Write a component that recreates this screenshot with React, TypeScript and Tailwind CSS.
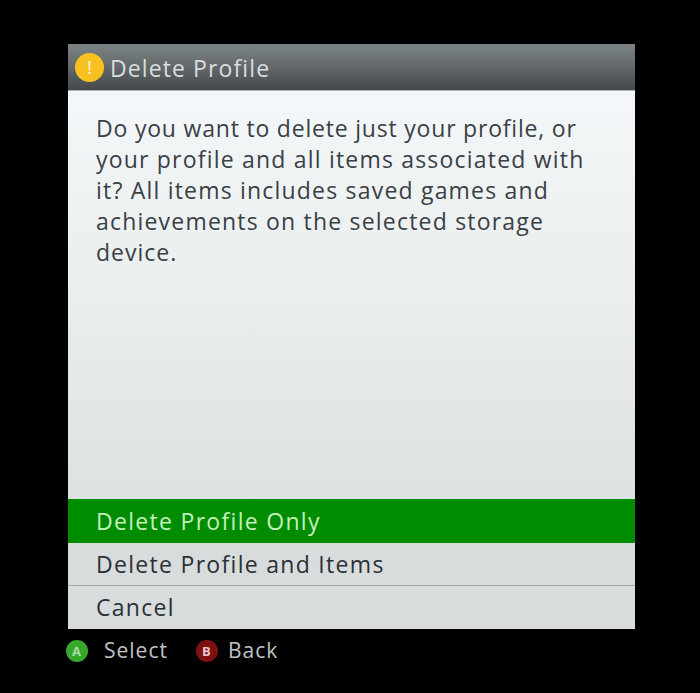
const lines: [string, number][] = [
  ["Do you want to delete just your profile, or", 0.8],
  ["your profile and all items associated with", 1.2],
  ["it? All items includes saved games and", 1.2],
  ["achievements on the selected storage", 1.2],
  ["device.", 1.0],
];

export default function App() {
  const font = { fontFamily: '"Open Sans", sans-serif' };
  return (
    <div className="w-[700px] h-[693px] bg-black pt-[44px] pl-[68px] overflow-hidden" style={font}>
      <div className="w-[567px] flex flex-col">
        <div className="h-[47px] flex items-center pl-[7px] bg-gradient-to-b from-[#7d8486] via-[#63696b] to-[#43494b] border-b border-[#aab4b6]">
          <div className="w-[29px] h-[29px] rounded-full bg-[#f9c120] flex items-center justify-center text-[#f4f8e8] text-[19px] leading-none">!</div>
          <span className="ml-[6px] mt-[3px] text-[23px] tracking-[1.1px] leading-none text-[#d8dddf]">Delete Profile</span>
        </div>
        <div className="h-[408px] bg-gradient-to-b from-[#f4f7f9] via-[#eaeeee] to-[#dde1e1] pt-[22px] px-[28px]">
          <div className="text-[23px] leading-[31px] text-[#3a4045] whitespace-nowrap">
            {lines.map(([t, s]) => (
              <p key={t} style={{ letterSpacing: `${s}px` }}>{t}</p>
            ))}
          </div>
        </div>
        <div className="h-[44px] flex items-center pl-[28px] bg-[#008c00] text-[23px] tracking-[1.3px] text-[#c4f0bc]">Delete Profile Only</div>
        <div className="h-[42px] flex items-center pl-[28px] bg-[#d8dcdc] text-[23px] tracking-[1.3px] text-[#2b3035] border-b border-[#a3a7a8] box-content">Delete Profile and Items</div>
        <div className="h-[43px] flex items-center pl-[28px] bg-[#d8dcdc] text-[23px] tracking-[1.3px] text-[#2b3035]">Cancel</div>
      </div>
      <div className="flex items-center h-[44px] -ml-[2px] text-[21px] tracking-[1px] text-[#c0c4c6]">
        <div className="w-[22px] h-[22px] rounded-full bg-[#37a82c] flex items-center justify-center text-[13px] font-bold leading-none text-[#a8dca4]">A</div>
        <span className="ml-[16px]">Select</span>
        <div className="ml-[28px] w-[22px] h-[22px] rounded-full bg-[#7f1010] flex items-center justify-center text-[13px] font-bold leading-none text-[#e8c8c8]">B</div>
        <span className="ml-[10px]">Back</span>
      </div>
    </div>
  );
}
